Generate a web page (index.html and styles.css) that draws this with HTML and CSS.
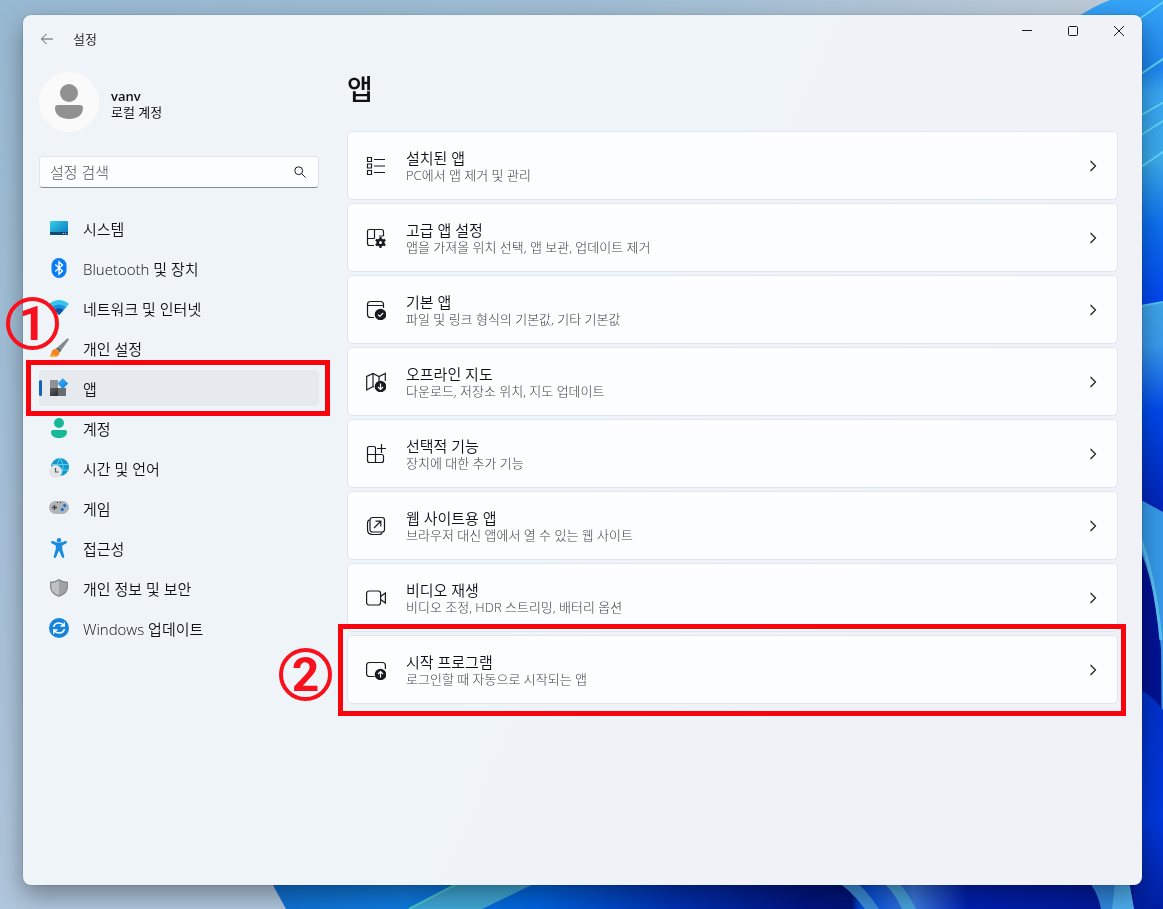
FILE: index.html
```html
<!DOCTYPE html>
<html lang="ko">
<head>
    <meta charset="UTF-8">
    <meta name="viewport" content="width=device-width, initial-scale=1.0">
    <title>설정 - 앱</title>
    <link rel="stylesheet" href="styles.css">
</head>
<body>
    <!-- Wallpaper -->
    <svg class="wallpaper" viewBox="0 0 1163 909" preserveAspectRatio="none" aria-hidden="true">
        <defs>
            <linearGradient id="sky" x1="0" y1="0" x2="1" y2="0">
                <stop offset="0" stop-color="#98b9d2"/>
                <stop offset="0.5" stop-color="#9fbcd3"/>
                <stop offset="1" stop-color="#c0ccd8"/>
            </linearGradient>
            <linearGradient id="skyLow" x1="0" y1="0" x2="0" y2="1">
                <stop offset="0" stop-color="#aec5da" stop-opacity="0"/>
                <stop offset="1" stop-color="#b0c6dc"/>
            </linearGradient>
            <linearGradient id="petals" x1="0" y1="0" x2="0" y2="1">
                <stop offset="0" stop-color="#36a4f6"/>
                <stop offset="0.22" stop-color="#1d84ee"/>
                <stop offset="0.3" stop-color="#37a5f2"/>
                <stop offset="0.52" stop-color="#3aa9ea"/>
                <stop offset="0.72" stop-color="#0d70ee"/>
                <stop offset="1" stop-color="#0040ee"/>
            </linearGradient>
            <linearGradient id="fold" x1="0" y1="0" x2="0" y2="1">
                <stop offset="0" stop-color="#3fa4e8"/>
                <stop offset="0.2" stop-color="#3898ea"/>
                <stop offset="0.5" stop-color="#0048ea"/>
                <stop offset="1" stop-color="#0020b0"/>
            </linearGradient>
            <linearGradient id="floor" x1="273" y1="0" x2="1163" y2="0" gradientUnits="userSpaceOnUse">
                <stop offset="0" stop-color="#1070d0"/>
                <stop offset="0.15" stop-color="#0f7ade"/>
                <stop offset="0.3" stop-color="#0062dc"/>
                <stop offset="0.45" stop-color="#0030b0"/>
                <stop offset="0.6" stop-color="#001480"/>
                <stop offset="0.65" stop-color="#001478"/>
                <stop offset="0.66" stop-color="#0048d8"/>
                <stop offset="0.72" stop-color="#3a78dc"/>
                <stop offset="0.78" stop-color="#0020b0"/>
                <stop offset="1" stop-color="#001690"/>
            </linearGradient>
            <linearGradient id="orb" x1="0" y1="0" x2="0" y2="1">
                <stop offset="0" stop-color="#0030c8"/>
                <stop offset="0.6" stop-color="#0038dc"/>
                <stop offset="1" stop-color="#001ea0"/>
            </linearGradient>
        </defs>
        <rect width="1163" height="909" fill="url(#sky)"/>
        <rect width="400" height="909" fill="url(#skyLow)"/>
        <path d="M1076 18Q1092 7 1110 0H1163V310H1120V18Z" fill="url(#petals)"/>
        <g fill="none" stroke="#5fd4f2" stroke-width="2">
            <path d="M1138 20L1166 0M1138 76L1166 57M1138 117L1166 101M1138 137L1166 119M1138 169L1166 150"/>
        </g>
        <path d="M1130 308L1163 302V520H1130Z" fill="url(#fold)"/>
        <path d="M1130 308L1163 302" stroke="#56c2ea" stroke-width="2"/>
        <path d="M1130 494L1163 512V909H1130Z" fill="#3699e9"/>
        <path d="M1130 530Q1155 570 1161 650L1163 909H1130Z" fill="#001292"/>
        <path d="M1138 533Q1154 570 1161 640" fill="none" stroke="#58bff0" stroke-width="3"/>
        <path d="M1130 684Q1152 694 1163 710V909H1130Z" fill="url(#orb)"/>
        <path d="M268 876L286 909H1134V876Z" fill="url(#floor)"/>
        <path d="M472 876L409 909H482L550 876Z" fill="#3fa6d4"/>
        <path d="M472 876L409 909" stroke="#46c8d0" stroke-width="2"/>
        <path d="M828 876Q850 888 865 909H879Q866 888 848 876Z" fill="#3a8cd8"/>
        <path d="M876 876Q894 890 902 909H916Q906 888 892 876Z" fill="#46a0dc"/>
        <path d="M1084 876Q1098 890 1101 909H1134L1128 876Z" fill="#2f86dc"/>
        <path d="M1116 876L1112 909H1134L1128 876Z" fill="#4cacec"/>
    </svg>

    <div class="window">
        <header class="titlebar">
            <button type="button" class="back" aria-label="뒤로">
                <svg width="14" height="12" viewBox="0 0 14 12"><path d="M6.5 1L1.5 6L6.5 11M1.5 6H13"/></svg>
            </button>
            <span class="window-title">설정</span>
            <div class="window-controls">
                <button type="button" aria-label="최소화">
                    <svg width="12" height="12" viewBox="0 0 12 12"><path d="M1 5.5H11"/></svg>
                </button>
                <button type="button" aria-label="최대화">
                    <svg width="12" height="12" viewBox="0 0 12 12"><rect x="1.5" y="1.5" width="9" height="9" rx="1"/></svg>
                </button>
                <button type="button" aria-label="닫기">
                    <svg width="12" height="12" viewBox="0 0 12 12"><path d="M1 1L11 11M11 1L1 11"/></svg>
                </button>
            </div>
        </header>

        <div class="content">
            <aside class="sidebar">
                <div class="account">
                    <svg class="avatar" width="60" height="60" viewBox="0 0 60 60" aria-hidden="true">
                        <circle cx="30" cy="30" r="30" fill="#fafafa"/>
                        <circle cx="30" cy="21" r="9" fill="#919191"/>
                        <path d="M19 33H41Q44 33 44 36C44 43 38 47 30 47S16 43 16 36Q16 33 19 33Z" fill="#919191"/>
                    </svg>
                    <div class="account-text">
                        <div class="account-name">vanv</div>
                        <div class="account-type">로컬 계정</div>
                    </div>
                </div>

                <div class="search">
                    <input type="search" placeholder="설정 검색" aria-label="설정 검색">
                    <svg width="12" height="12" viewBox="0 0 12 12" aria-hidden="true"><circle cx="4.7" cy="4.7" r="3.9"/><path d="M7.6 7.6L11.5 11.5"/></svg>
                </div>

                <nav class="nav">
                    <a href="#" class="nav-item">
                        <svg width="20" height="20" viewBox="0 0 20 20">
                            <defs><linearGradient id="screen" x1="0" y1="0" x2="1" y2="1"><stop offset="0" stop-color="#33d2e6"/><stop offset="1" stop-color="#0a6fc0"/></linearGradient></defs>
                            <rect x="1" y="3" width="18" height="14" rx="1" fill="url(#screen)"/>
                            <path d="M1 14H19V16Q19 17 18 17H2Q1 17 1 16Z" fill="#134a6d"/>
                            <path d="M14 15.5H15M16 15.5H17" stroke="#cfe8f4"/>
                        </svg>
                        시스템
                    </a>
                    <a href="#" class="nav-item">
                        <svg width="20" height="20" viewBox="0 0 20 20">
                            <rect x="2.5" y="0" width="15" height="20" rx="7.5" fill="#0a7cf5"/>
                            <path d="M6.3 6.6L13.4 13L10 16.2V3.8L13.4 7L6.3 13.4" fill="none" stroke="#fff" stroke-width="1.4"/>
                        </svg>
                        Bluetooth 및 장치
                    </a>
                    <a href="#" class="nav-item">
                        <svg width="20" height="20" viewBox="0 0 20 20">
                            <path d="M0 6Q10 -2 20 6L10 17Z" fill="#35c3f0"/>
                            <path d="M3 9.3Q10 3.5 17 9.3L10 17Z" fill="#1a90dc"/>
                            <path d="M5.6 12.2Q10 8 14.4 12.2L10 17Z" fill="#0b55a8"/>
                        </svg>
                        네트워크 및 인터넷
                    </a>
                    <a href="#" class="nav-item">
                        <svg width="20" height="20" viewBox="0 0 20 20">
                            <path d="M19.3 0.6Q20 1.4 19.3 2.6L11 14L7.2 10.6L17.6 0.9Q18.6 0 19.3 0.6Z" fill="#858a90"/>
                            <path d="M8.4 9.5L12.2 12.6L11 14L7.2 10.6Z" fill="#5c6066"/>
                            <path d="M7 10.7Q2.8 11 2.4 15Q2.2 17 .6 18Q4 20 7.6 18.4Q11 17 10.6 13.8Z" fill="#f5831f"/>
                            <path d="M4 16Q3.4 18 .6 18Q4 20 7.4 18.4Z" fill="#ffb638"/>
                        </svg>
                        개인 설정
                    </a>
                    <a href="#" class="nav-item active" aria-current="page">
                        <svg width="20" height="20" viewBox="0 0 20 20">
                            <defs>
                                <linearGradient id="tileDark" x1="0" y1="0" x2="1" y2="1"><stop offset="0" stop-color="#5c5e62"/><stop offset="1" stop-color="#2c2e30"/></linearGradient>
                                <linearGradient id="tileBlue" x1="0" y1="0" x2="1" y2="1"><stop offset="0" stop-color="#40b4f6"/><stop offset="1" stop-color="#0f7cd8"/></linearGradient>
                            </defs>
                            <rect x="1" y="2" width="8" height="8" fill="#8f9194"/>
                            <rect x="1" y="10" width="8" height="8" fill="url(#tileDark)"/>
                            <rect x="9" y="10" width="8" height="8" fill="#6a6c70"/>
                            <path d="M13.7 0.3L19.2 5.6L13.7 11L8.5 5.6Z" fill="url(#tileBlue)"/>
                        </svg>
                        앱
                        <span class="callout callout-nav"><b>1</b></span>
                    </a>
                    <a href="#" class="nav-item">
                        <svg width="20" height="20" viewBox="0 0 20 20" fill="#16b898">
                            <circle cx="10" cy="5" r="5"/>
                            <path d="M4 12H16Q18 12 18 14C18 18 14.5 20 10 20S2 18 2 14Q2 12 4 12Z"/>
                        </svg>
                        계정
                    </a>
                    <a href="#" class="nav-item">
                        <svg width="20" height="20" viewBox="0 0 20 20">
                            <circle cx="11" cy="9" r="9" fill="#1496ce"/>
                            <path d="M3 6.5H19.5M3 12H19.5M11 0Q5 9 11 18Q17 9 11 0" fill="none" stroke="#56d0e8"/>
                            <circle cx="6.5" cy="13.5" r="6.5" fill="#e4e4e4"/>
                            <path d="M6.5 10V14H9.5" fill="none" stroke="#55585c" stroke-width="1.2"/>
                        </svg>
                        시간 및 언어
                    </a>
                    <a href="#" class="nav-item">
                        <svg width="20" height="20" viewBox="0 0 20 20">
                            <rect x="0" y="3" width="20" height="13" rx="6.5" fill="#b0b3b8"/>
                            <path d="M3 9.5H8M5.5 7V12" stroke="#3e4146" stroke-width="1.3"/>
                            <path d="M8 4.5H9M11 4.5H12" stroke="#3e4146"/>
                            <circle cx="15.7" cy="7.6" r="1.6" fill="#1c6fd0"/>
                            <circle cx="13.3" cy="11.6" r="1.6" fill="#1c6fd0"/>
                        </svg>
                        게임
                    </a>
                    <a href="#" class="nav-item">
                        <svg width="20" height="20" viewBox="0 0 20 20" fill="#168be0">
                            <circle cx="10" cy="2.2" r="2.2"/>
                            <path d="M2.2 3.6Q2.8 2.6 4 3Q10 6.4 16 3Q17.3 2.6 17.8 3.6Q18.2 4.8 17 5.4L13.2 7.4V11L15.3 18.4Q15.4 19.6 14.4 19.9Q13.3 20.1 12.9 19L10 12.6L7.1 19Q6.7 20.1 5.6 19.9Q4.6 19.6 4.7 18.4L6.8 11V7.4L3 5.4Q1.8 4.8 2.2 3.6Z"/>
                        </svg>
                        접근성
                    </a>
                    <a href="#" class="nav-item">
                        <svg width="20" height="20" viewBox="0 0 20 20">
                            <path d="M10 1Q13.5 3.6 19 3.8V9Q19 15.6 10 19Q1 15.6 1 9V3.8Q6.5 3.6 10 1Z" fill="#85888b"/>
                            <path d="M10 2.5Q13 4.6 17.7 5V9Q17.7 14.4 10 17.5Z" fill="#9fa2a5"/>
                            <path d="M10 2.5Q7 4.6 2.3 5V9Q2.3 14.4 10 17.5Z" fill="#bfc1c3"/>
                        </svg>
                        개인 정보 및 보안
                    </a>
                    <a href="#" class="nav-item">
                        <svg width="20" height="20" viewBox="0 0 20 20">
                            <circle cx="10" cy="10" r="10" fill="#1484dc"/>
                            <path d="M4.6 9Q5.4 5 10 5Q13 5 15 7.6M15.4 11Q14.6 15 10 15Q7 15 5 12.4" fill="none" stroke="#fff" stroke-width="1.6"/>
                            <path d="M15.3 4.2V8H11.5M4.7 15.8V12H8.5" fill="none" stroke="#fff" stroke-width="1.4"/>
                        </svg>
                        Windows 업데이트
                    </a>
                </nav>
            </aside>

            <main class="main">
                <h1>앱</h1>
                <div class="cards">
                    <a href="#" class="card">
                        <svg class="card-icon" width="20" height="20" viewBox="0 0 20 20"><path d="M1.5 1.5H5.5V5.5H1.5ZM1.5 8H5.5V12H1.5ZM1.5 14.5H5.5V18.5H1.5ZM8 3.5H19M8 10H19M8 16.5H19"/></svg>
                        <span class="card-text"><span class="card-title">설치된 앱</span><span class="card-desc">PC에서 앱 제거 및 관리</span></span>
                        <svg class="chevron" width="12" height="12" viewBox="0 0 12 12"><path d="M3.5 1L8.5 6L3.5 11"/></svg>
                    </a>
                    <a href="#" class="card">
                        <svg class="card-icon" width="20" height="20" viewBox="0 0 20 20">
                            <path d="M8 17.5H3.5Q1.5 17.5 1.5 15.5V3.5Q1.5 1.5 3.5 1.5H15.5Q17.5 1.5 17.5 3.5V8M8.5 1.5V10.5M1.5 10.5H8.5M17.5 8H13"/>
                            <circle cx="14.5" cy="14.5" r="2.8" stroke-width="2.6"/>
                            <path d="M14.5 9V11M14.5 18V20M9.7 11.7L11.5 12.8M17.5 16.2L19.3 17.3M9.7 17.3L11.5 16.2M17.5 12.8L19.3 11.7" stroke-width="2.2"/>
                        </svg>
                        <span class="card-text"><span class="card-title">고급 앱 설정</span><span class="card-desc">앱을 가져올 위치 선택, 앱 보관, 업데이트 제거</span></span>
                        <svg class="chevron" width="12" height="12" viewBox="0 0 12 12"><path d="M3.5 1L8.5 6L3.5 11"/></svg>
                    </a>
                    <a href="#" class="card">
                        <svg class="card-icon" width="20" height="20" viewBox="0 0 20 20">
                            <path d="M8 17.5H4.5Q1.5 17.5 1.5 14.5V4.5Q1.5 1.5 4.5 1.5H14.5Q17.5 1.5 17.5 4.5V8M1.5 5.5H17.5"/>
                            <circle cx="14.5" cy="14.5" r="5.8" class="solid"/>
                            <path d="M12 14.6L13.8 16.4L17.2 12.8" class="mark"/>
                        </svg>
                        <span class="card-text"><span class="card-title">기본 앱</span><span class="card-desc">파일 및 링크 형식의 기본값, 기타 기본값</span></span>
                        <svg class="chevron" width="12" height="12" viewBox="0 0 12 12"><path d="M3.5 1L8.5 6L3.5 11"/></svg>
                    </a>
                    <a href="#" class="card">
                        <svg class="card-icon" width="20" height="20" viewBox="0 0 20 20">
                            <path d="M8 15L7 14.5L.7 18V4.5L7 1.5L13 4.5L19.3 1.5V9M7 1.5V14.5M13 4.5V9"/>
                            <circle cx="14.5" cy="14.5" r="5.8" class="solid"/>
                            <path d="M14.5 11.5V17M12 15L14.5 17.4L17 15" class="mark"/>
                        </svg>
                        <span class="card-text"><span class="card-title">오프라인 지도</span><span class="card-desc">다운로드, 저장소 위치, 지도 업데이트</span></span>
                        <svg class="chevron" width="12" height="12" viewBox="0 0 12 12"><path d="M3.5 1L8.5 6L3.5 11"/></svg>
                    </a>
                    <a href="#" class="card">
                        <svg class="card-icon" width="20" height="20" viewBox="0 0 20 20"><path d="M9.5 10.5V4.5Q9.5 2.5 7.5 2.5H3.5Q1.5 2.5 1.5 4.5V16.5Q1.5 18.5 3.5 18.5H15.5Q17.5 18.5 17.5 16.5V12.5Q17.5 10.5 15.5 10.5H1.5M9.5 10.5V18.5M15.5 0V9M11 4.5H20"/></svg>
                        <span class="card-text"><span class="card-title">선택적 기능</span><span class="card-desc">장치에 대한 추가 기능</span></span>
                        <svg class="chevron" width="12" height="12" viewBox="0 0 12 12"><path d="M3.5 1L8.5 6L3.5 11"/></svg>
                    </a>
                    <a href="#" class="card">
                        <svg class="card-icon" width="20" height="20" viewBox="0 0 20 20">
                            <rect x="4" y="1.5" width="14.5" height="14.5" rx="2.5"/>
                            <path d="M3.8 3.8Q1.5 4.5 1.5 7V13.5Q1.5 18.5 6.5 18.5H13Q15.6 18.5 16.4 16.2M8 12L14.5 5.5M9.5 5.2H14.8V10.5"/>
                        </svg>
                        <span class="card-text"><span class="card-title">웹 사이트용 앱</span><span class="card-desc">브라우저 대신 앱에서 열 수 있는 웹 사이트</span></span>
                        <svg class="chevron" width="12" height="12" viewBox="0 0 12 12"><path d="M3.5 1L8.5 6L3.5 11"/></svg>
                    </a>
                    <a href="#" class="card">
                        <svg class="card-icon" width="20" height="20" viewBox="0 0 20 20"><rect x=".6" y="3" width="14" height="14" rx="2.5"/><path d="M14.6 8.5L19.4 5V15L14.6 11.5"/></svg>
                        <span class="card-text"><span class="card-title">비디오 재생</span><span class="card-desc">비디오 조정, HDR 스트리밍, 배터리 옵션</span></span>
                        <svg class="chevron" width="12" height="12" viewBox="0 0 12 12"><path d="M3.5 1L8.5 6L3.5 11"/></svg>
                    </a>
                    <a href="#" class="card">
                        <svg class="card-icon" width="20" height="20" viewBox="0 0 20 20">
                            <path d="M8.5 16.5H3.6Q.6 16.5 .6 13.5V5.5Q.6 2.5 3.6 2.5H16.4Q19.4 2.5 19.4 5.5V9"/>
                            <circle cx="14.5" cy="14.5" r="5.8" class="solid"/>
                            <path d="M14.5 17.5V12M12 14L14.5 11.6L17 14" class="mark"/>
                        </svg>
                        <span class="card-text"><span class="card-title">시작 프로그램</span><span class="card-desc">로그인할 때 자동으로 시작되는 앱</span></span>
                        <svg class="chevron" width="12" height="12" viewBox="0 0 12 12"><path d="M3.5 1L8.5 6L3.5 11"/></svg>
                        <span class="callout callout-card"><b>2</b></span>
                    </a>
                </div>
            </main>
        </div>
    </div>
</body>
</html>
```
FILE: styles.css
```css
* {
    box-sizing: border-box;
}
body {
    margin: 0;
    min-height: 100vh;
    padding: 15px 21px 24px 23px;
    display: flex;
    font-family: "Open Sans", "Noto Sans CJK KR", sans-serif;
    font-size: 15px;
    font-weight: 350;
    color: #111;
}
a {
    color: inherit;
    text-decoration: none;
}
button {
    display: flex;
    align-items: center;
    justify-content: center;
    padding: 0;
    border: none;
    background: none;
    color: inherit;
}
svg {
    flex: none;
}
.wallpaper {
    position: fixed;
    top: 0;
    left: 0;
    width: 100%;
    height: 100%;
    z-index: -1;
}
.window {
    flex: 1;
    min-width: 0;
    border-radius: 8px;
    background: linear-gradient(115deg, #eff4f8 50%, #f0f2f8 75%);
    box-shadow: 0 0 1px rgba(0, 0, 0, 0.7), 0 10px 24px rgba(0, 0, 0, 0.36);
}

/* Title bar */
.titlebar {
    display: flex;
    align-items: center;
    height: 48px;
    padding-left: 10px;
}
.back {
    width: 28px;
    height: 28px;
}
.back svg, .window-controls svg, .search svg, .card-icon, .chevron {
    fill: none;
    stroke: #1b1b1b;
}
.back svg {
    stroke: #5a5d60;
}
.window-title {
    margin-left: 12px;
    padding-bottom: 2px;
    font-size: 13px;
}
.window-controls {
    display: flex;
    align-self: flex-start;
    margin-left: auto;
}
.window-controls button {
    width: 46px;
    height: 32px;
}

/* Sidebar */
.content {
    display: grid;
    grid-template-columns: 280px minmax(0, 1fr);
    column-gap: 28px;
    padding: 8px 24px 24px 16px;
}
.account {
    display: flex;
    align-items: center;
    gap: 12px;
    padding-top: 1px;
    font-size: 13px;
    line-height: 16px;
}
.account-text {
    padding-top: 4px;
    font-weight: 400;
}
.account-name {
    font-weight: 600;
}
.search {
    display: flex;
    align-items: center;
    height: 32px;
    margin: 24px 0 22px;
    padding: 0 12px 0 10px;
    border: 1px solid #dfe5ea;
    border-bottom-color: #84888c;
    border-radius: 4px;
    background: #fcfdfe;
}
.search input {
    flex: 1;
    min-width: 0;
    padding: 0;
    border: none;
    outline: none;
    background: none;
    font-family: inherit;
    font-size: 15px;
    font-weight: 300;
}
.search input::placeholder {
    color: #505356;
}
.nav {
    display: flex;
    flex-direction: column;
    gap: 4px;
}
.nav-item {
    position: relative;
    display: flex;
    align-items: center;
    gap: 14px;
    height: 36px;
    padding-left: 10px;
    border-radius: 4px;
}
.nav-item.active {
    background: #e6eaef;
}
.nav-item.active::before {
    content: "";
    position: absolute;
    left: 0;
    top: 10px;
    width: 3px;
    height: 16px;
    border-radius: 2px;
    background: #0f62bd;
}

/* Main */
h1 {
    margin: 0 0 24px;
    font-size: 28px;
    line-height: 36px;
    font-weight: 500;
}
.cards {
    display: flex;
    flex-direction: column;
    gap: 3px;
}
.card {
    position: relative;
    display: flex;
    align-items: center;
    gap: 20px;
    height: 69px;
    padding: 0 18px;
    border: 1px solid #dfe5ec;
    border-radius: 5px;
    background: #fcfdfe;
}
.card-icon, .chevron {
    stroke-width: 1.2;
}
.card-icon .solid {
    fill: #1b1b1b;
    stroke: none;
}
.card-icon .mark {
    stroke: #fff;
}
.card-text {
    display: flex;
    flex: 1;
    flex-direction: column;
    min-width: 0;
}
.card-title {
    line-height: 18px;
}
.card-desc {
    font-size: 13px;
    font-weight: 300;
    line-height: 16px;
    color: #3c3f42;
}

/* Step callouts */
.callout {
    position: absolute;
    z-index: 1;
    border: 5px solid #f8040e;
    pointer-events: none;
}
.callout-nav {
    inset: -10px -11px -10px -13px;
}
.callout-card {
    inset: -12px -9px -13px -10px;
}
.callout b {
    position: absolute;
    display: flex;
    align-items: center;
    justify-content: center;
    width: 53px;
    height: 53px;
    border: 4px solid #f8101c;
    border-radius: 50%;
    color: #f8101c;
    font-family: Roboto, sans-serif;
    font-size: 48px;
    font-weight: 700;
    line-height: 1;
}
.callout-nav b {
    left: -25px;
    top: -68px;
}
.callout-card b {
    left: -64px;
    top: 19px;
}
```
